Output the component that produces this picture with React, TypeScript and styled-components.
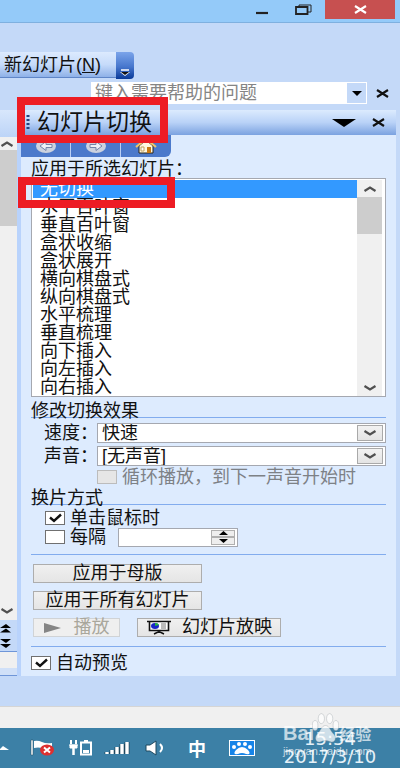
import React from "react";
import styled, { createGlobalStyle } from "styled-components";

const GlobalStyle = createGlobalStyle`
  * { box-sizing: border-box; }
  body {
    margin: 0;
    background: #c4d9f8;
    color: #111;
    font-family: "Liberation Sans", "Noto Sans CJK SC", sans-serif;
    font-size: 18px;
  }
  button, input, select { font: inherit; color: inherit; margin: 0; }
`;

const Page = styled.div`
  position: relative;
  overflow: hidden;
`;

const TitleBar = styled.header`
  display: flex;
  justify-content: flex-end;
  height: 23px;
  padding-right: 5px;
  background: #94caf9;
  border-bottom: 1px solid #7fb0df;
`;

const WindowButton = styled.button<{ $width: number; $close?: boolean }>`
  display: grid;
  place-items: center;
  width: ${(p) => p.$width}px;
  height: 19px;
  padding: 0;
  border: 0;
  background: ${(p) => (p.$close ? "#c75050" : "transparent")};
`;

const Ribbon = styled.div`
  display: flex;
  height: 59px;
  padding-top: 29px;
`;

const NewSlide = styled.button`
  height: 26px;
  width: 116px;
  padding: 0 0 0 4px;
  border: 0;
  text-align: left;
  white-space: nowrap;
  line-height: 24px;
  background: linear-gradient(#dceafe, #c6dbfa 50%, #8eb1e8);
  border-bottom: 1px solid #5f86c8;
`;

const RibbonMore = styled.button`
  display: grid;
  place-items: end center;
  width: 18px;
  height: 27px;
  padding: 0 0 3px;
  border: 0;
  border-radius: 0 4px 4px 0;
  background: linear-gradient(#7ba4ea, #4676cd 55%, #0a3a98);
`;

const HelpRow = styled.div`
  display: flex;
  align-items: center;
  height: 22px;
  padding: 0 2px 0 91px;
`;

const HelpInput = styled.input`
  flex: 1;
  min-width: 0;
  height: 22px;
  padding: 0 4px;
  border: 0;
  background: #fff;
  &::placeholder { color: #858585; opacity: 1; }
`;

const HelpDrop = styled.button`
  display: grid;
  place-items: center;
  width: 21px;
  height: 22px;
  padding: 0;
  border: 1px solid #fff;
  background: #c4d9f8;
`;

const PlainButton = styled.button<{ $width?: number }>`
  display: grid;
  place-items: center;
  width: ${(p) => p.$width ?? 31}px;
  height: 22px;
  padding: 0;
  border: 0;
  background: transparent;
`;

const Workspace = styled.main`
  display: flex;
  padding: 2px 4px 0 0;
  border-top: 4px solid #c4d9f8;
`;

const DocumentEdge = styled.aside`
  display: flex;
  flex-direction: column;
  width: 17px;
  background: #c4d9f8;
`;

const EdgeTop = styled.div`
  height: 27px;
  background: linear-gradient(#d8e7fc, #bcd4f7);
`;

const EdgeTrack = styled.div`
  display: flex;
  flex-direction: column;
  flex: 1;
  background: #f0f0f0;
`;

const EdgeButton = styled.button<{ $height: number; $blue?: boolean }>`
  width: 17px;
  height: ${(p) => p.$height}px;
  padding: 0;
  border: 0;
  line-height: 0;
  text-align: left;
  background: ${(p) => (p.$blue ? "#c4d9f8" : "#f0f0f0")};
`;

const EdgeThumb = styled.div`
  height: 76px;
  background: #cdcdcd;
`;

const EdgeSpace = styled.div`
  flex: 1;
`;

const EdgeFooter = styled.div`
  height: 25px;
  border-top: 1px solid #6f96d8;
  border-bottom: 1px solid #6f96d8;
  background: linear-gradient(#f0f0f0 16px, #d0e0f8 16px);
`;

const Pane = styled.section`
  flex: 1;
  min-width: 0;
  border-left: 4px solid #b9d3fc;
  background: #ddebfe;
`;

const PaneHeader = styled.div`
  display: flex;
  align-items: center;
  height: 25px;
  padding: 0 2px 0 5px;
  background: linear-gradient(#dcebfe, #b9d2f7 50%, #7ba2e0);
`;

const PaneTitle = styled.h1`
  flex: 1;
  margin: 0 0 0 7px;
  font-size: 23px;
  font-weight: 400;
  line-height: 23px;
  white-space: nowrap;
`;

const NavBar = styled.nav`
  display: grid;
  grid-template-columns: 50px 50px 50px;
  width: 150px;
  height: 22px;
  border-radius: 0 0 6px 0;
  background: #4b79cb;
`;

const NavButton = styled.button`
  display: grid;
  place-items: center;
  padding: 0;
  border: 0;
  border-right: 1px solid #b9cff5;
  background: transparent;
  &:last-child { border-right: 0; }
`;

const PaneBody = styled.div`
  padding: 0 10px 4px;
`;

const ListLabel = styled.div`
  padding-top: 3px;
  line-height: 18px;
`;

const ListFrame = styled.div`
  display: flex;
  height: 219px;
  margin-bottom: 2px;
  padding: 1px 3px 0 1px;
  border: 1px solid #a5a8b0;
  background: #fff;
`;

const List = styled.div`
  flex: 1;
  overflow: hidden;
`;

const ListItem = styled.button<{ $selected?: boolean }>`
  display: block;
  width: 100%;
  height: 18px;
  padding: 0 0 0 7px;
  border: 0;
  text-align: left;
  line-height: 18px;
  background: ${(p) => (p.$selected ? "#3399ff" : "transparent")};
  color: ${(p) => (p.$selected ? "#fff" : "#111")};
`;

const ListScroll = styled.div`
  display: flex;
  flex-direction: column;
  width: 25px;
  background: #f0f0f0;
`;

const ScrollButton = styled.button`
  height: 17px;
  padding: 0;
  border: 0;
  line-height: 0;
  background: transparent;
`;

const ScrollThumb = styled.div`
  height: 37px;
  background: #cdcdcd;
`;

const SectionTitle = styled.h2`
  margin: 0;
  padding-top: 6px;
  border-bottom: 1px solid #82acee;
  font-size: 18px;
  font-weight: 400;
  line-height: 12px;
`;

const Fields = styled.div`
  display: grid;
  gap: 3px;
  margin: 5px 0 2px;
`;

const Field = styled.label`
  display: grid;
  grid-template-columns: 53px 1fr;
  padding-left: 13px;
  line-height: 20px;
  white-space: nowrap;
`;

const SelectFrame = styled.span`
  display: flex;
  align-items: center;
  height: 20px;
  padding-right: 2px;
  border: 1px solid #a5a8b0;
  background: #fff;
`;

const Select = styled.select`
  flex: 1;
  appearance: none;
  height: 18px;
  padding: 0 4px;
  border: 0;
  line-height: 18px;
  background: transparent;
`;

const SelectArrow = styled.span`
  display: grid;
  place-items: center;
  width: 26px;
  height: 16px;
  border: 1px solid #a9a9a9;
  background: linear-gradient(#f2f2f2, #e4e4e4);
`;

const CheckRow = styled.div<{ $indent: number; $height: number }>`
  display: flex;
  align-items: center;
  height: ${(p) => p.$height}px;
  padding-left: ${(p) => p.$indent}px;
`;

const CheckLabel = styled.label<{ $disabled?: boolean }>`
  display: flex;
  align-items: center;
  gap: 5px;
  line-height: 18px;
  white-space: nowrap;
  color: ${(p) => (p.$disabled ? "#7d8186" : "#111")};
`;

const CheckFrame = styled.span`
  display: grid;
  width: 20px;
  height: 14px;
  svg { grid-area: 1 / 1; pointer-events: none; }
`;

const CheckInput = styled.input`
  grid-area: 1 / 1;
  appearance: none;
  width: 20px;
  height: 14px;
  border: 1px solid #707070;
  background: #fff;
  &:disabled { border-color: #bcbcbc; background: #e6e6e6; }
`;

const AdvanceRows = styled.div`
  margin-top: 4px;
`;

const Spinner = styled.div`
  display: flex;
  width: 120px;
  height: 19px;
  margin-left: 12px;
  padding: 1px 2px 1px 0;
  border: 1px solid #a5a8b0;
  background: #fff;
`;

const SpinnerInput = styled.input`
  flex: 1;
  min-width: 0;
  padding: 0 4px;
  border: 0;
  background: transparent;
`;

const SpinnerButtons = styled.div`
  display: grid;
  grid-template-rows: 1fr 1fr;
  width: 24px;
`;

const SpinnerButton = styled.button`
  display: grid;
  place-items: center;
  min-height: 0;
  padding: 0;
  border: 1px solid #b0b0b0;
  background: #eeeeee;
`;

const Divider = styled.hr`
  height: 1px;
  margin: 7px 0;
  border: 0;
  background: #82acee;
`;

const Actions = styled.div`
  display: grid;
  gap: 8px;
  margin: 9px 2px;
`;

const ActionRow = styled.div`
  display: flex;
  gap: 17px;
`;

const ActionButton = styled.button<{ $width: number }>`
  display: flex;
  align-items: center;
  justify-content: center;
  gap: 10px;
  width: ${(p) => p.$width}px;
  height: 19px;
  padding: 0;
  border: 1px solid #adadad;
  line-height: 17px;
  white-space: nowrap;
  background: linear-gradient(#f0f0f0, #e5e5e5);
  &:disabled { border-color: #d0d3d6; background: #efefef; color: #a9a79c; }
`;

const BelowPane = styled.div`
  height: 30px;
`;

const StatusBar = styled.footer`
  height: 22px;
  border-top: 1px solid #d5d5d5;
  background: #f0f0f0;
`;

const Taskbar = styled.div`
  position: relative;
  display: flex;
  align-items: center;
  height: 40px;
  background: #3c80a6;
`;

const TrayButton = styled.button<{ $width: number }>`
  display: grid;
  place-items: center;
  width: ${(p) => p.$width}px;
  height: 40px;
  padding: 0;
  border: 0;
  background: transparent;
  color: #fff;
  font-weight: 700;
`;

const Clock = styled.time`
  width: 96px;
  margin-left: 18px;
  color: #e6f1f8;
  font-family: "DejaVu Sans", sans-serif;
  font-size: 18px;
  line-height: 18px;
  text-align: center;
`;

const Watermark = styled.div`
  position: absolute;
  right: 25px;
  bottom: 11px;
  width: 92px;
  color: rgba(255, 255, 255, 0.7);
  white-space: nowrap;
`;

const Brand = styled.div`
  display: flex;
  align-items: center;
  height: 24px;
  font-size: 20px;
  font-weight: 700;
`;

const BrandAddress = styled.div`
  font-size: 11px;
  line-height: 12px;
`;

const BrandPaw = styled.span`
  display: block;
  height: 40px;
  margin-left: -2px;
`;

const BrandText = styled.span`
  font-size: 16px;
`;

const Highlight = styled.div<{ $left: number; $top: number; $width: number; $height: number }>`
  position: absolute;
  left: ${(p) => p.$left}px;
  top: ${(p) => p.$top}px;
  width: ${(p) => p.$width}px;
  height: ${(p) => p.$height}px;
  border: 8px solid #ed1c24;
  pointer-events: none;
`;

const Chevron = ({ up }: { up?: boolean }) => (
  <svg width="14" height="8" viewBox="0 0 14 8" aria-hidden="true">
    <path d={up ? "M1.500 6L7 2.500L12.500 6" : "M1.500 2L7 5.500L12.500 2"} fill="none" stroke="#505050" strokeWidth="2.200" />
  </svg>
);

const Triangle = ({ width, height, up }: { width: number; height: number; up?: boolean }) => (
  <svg width={width} height={height} viewBox="0 0 10 10" preserveAspectRatio="none" aria-hidden="true">
    <path d={up ? "M0 10L5 0L10 10Z" : "M0 0L5 10L10 0Z"} fill="#000" />
  </svg>
);

const Cross = ({ color = "#111" }: { color?: string }) => (
  <svg width="13" height="9" viewBox="0 0 13 9" aria-hidden="true">
    <path d="M1 1L12 8M12 1L1 8" stroke={color} strokeWidth="2.100" />
  </svg>
);

const DoubleArrow = ({ down }: { down?: boolean }) => (
  <svg width="12" height="10" viewBox="0 0 12 10" aria-hidden="true">
    <path d={down ? "M0 0H11L6 4ZM0 5H11L6 9Z" : "M0 5L6 1L11 5ZM0 9.500L6 5.500L11 9.500Z"} fill="#000" />
  </svg>
);

const NavArrow = ({ right }: { right?: boolean }) => (
  <svg width="22" height="16" viewBox="0 0 22 16" aria-hidden="true">
    <ellipse cx="11" cy="8" rx="10" ry="7" fill="#cbd2df" />
    <path
      d={right ? "M5 6.500H11V3.500L17 8L11 12.500V9.500H5Z" : "M17 6.500H11V3.500L5 8L11 12.500V9.500H17Z"}
      fill="#eef1f7"
      stroke="#7484a8"
    />
  </svg>
);

const HomeIcon = () => (
  <svg width="22" height="18" viewBox="0 0 22 18" aria-hidden="true">
    <path d="M4 9V16H18V9L11 3Z" fill="#fff7df" stroke="#2c2415" />
    <path d="M1 10L11 2L21 10" fill="none" stroke="#f0c468" strokeWidth="2.200" />
    <path d="M6 10H9V14H6Z" fill="#fff" stroke="#c4a25c" />
    <path d="M12 10H16V16H12Z" fill="#c87912" />
  </svg>
);

const ScreenIcon = () => (
  <svg width="26" height="15" viewBox="0 0 26 15" aria-hidden="true">
    <path d="M1 1.500H25M3.500 2V10.500H22.500V2" fill="#fff" stroke="#111" strokeWidth="1.600" />
    <path d="M13 11V13M8 14L12 12H14L18 14" fill="none" stroke="#111" strokeWidth="1.500" />
    <ellipse cx="9" cy="6" rx="4" ry="3" fill="#1a25c8" />
    <path d="M9 6V3A4 3 0 0 1 13 5Z" fill="#25b93c" />
    <path d="M15 4H20M15 6H20M15 8H20" stroke="#777" />
  </svg>
);

const Paw = ({ width, height, color }: { width: number; height: number; color: string }) => (
  <svg width={width} height={height} viewBox="0 0 26 24" preserveAspectRatio="none" aria-hidden="true">
    <g fill={color} stroke="rgba(150,160,165,0.4)" strokeWidth="0.800">
      <ellipse cx="3" cy="10" rx="2.700" ry="4" />
      <ellipse cx="9" cy="4.500" rx="3" ry="4" />
      <ellipse cx="17" cy="4.500" rx="3" ry="4" />
      <ellipse cx="23" cy="10" rx="2.700" ry="4" />
      <path d="M13 10C9 10 9 14 5 17C2 20 4 24 8 23Q13 21 18 23C22 24 24 20 21 17C17 14 17 10 13 10Z" />
    </g>
  </svg>
);

interface CheckProps {
  id: string;
  text: string;
  checked?: boolean;
  disabled?: boolean;
}

const Check = ({ id, text, checked, disabled }: CheckProps) => {
  const [on, setOn] = React.useState(Boolean(checked));
  return (
    <CheckLabel htmlFor={id} $disabled={disabled}>
      <CheckFrame>
        <CheckInput id={id} type="checkbox" checked={on} disabled={disabled} onChange={() => setOn(!on)} />
        {on && (
          <svg width="20" height="14" viewBox="0 0 20 14" aria-hidden="true">
            <path d="M5 6.500L9 10L16 3.500" fill="none" stroke="#111" strokeWidth="2.400" />
          </svg>
        )}
      </CheckFrame>
      {text}
    </CheckLabel>
  );
};

const transitions = [
  "无切换",
  "水平百叶窗",
  "垂直百叶窗",
  "盒状收缩",
  "盒状展开",
  "横向棋盘式",
  "纵向棋盘式",
  "水平梳理",
  "垂直梳理",
  "向下插入",
  "向左插入",
  "向右插入",
];

export default function App() {
  const [selected, setSelected] = React.useState(0);
  return (
    <Page>
      <GlobalStyle />
      <TitleBar>
        <WindowButton $width={40} aria-label="最小化">
          <svg width="14" height="10" viewBox="0 0 14 10"><path d="M1 8H13" stroke="#222" strokeWidth="2.200" /></svg>
        </WindowButton>
        <WindowButton $width={43} aria-label="还原">
          <svg width="17" height="11" viewBox="0 0 17 11">
            <path d="M4 2.500V1H16V8H13" fill="none" stroke="#222" />
            <path d="M1 3H12.500V10H1Z" fill="none" stroke="#222" strokeWidth="1.800" />
          </svg>
        </WindowButton>
        <WindowButton $width={70} $close aria-label="关闭"><Cross color="#fff" /></WindowButton>
      </TitleBar>
      <Ribbon>
        <NewSlide>新幻灯片(<u>N</u>)</NewSlide>
        <RibbonMore aria-label="更多按钮">
          <svg width="10" height="7" viewBox="0 0 10 7">
            <path d="M1 1H9" stroke="#fff" strokeWidth="1.500" />
            <path d="M0 3H10L5 7Z" fill="#fff" />
            <path d="M1 3H9L5 6Z" fill="#111" />
          </svg>
        </RibbonMore>
      </Ribbon>
      <HelpRow>
        <HelpInput aria-label="帮助" placeholder="键入需要帮助的问题" />
        <HelpDrop aria-label="帮助历史"><Triangle width={10} height={5} /></HelpDrop>
        <PlainButton aria-label="关闭文档"><Cross /></PlainButton>
      </HelpRow>
      <Workspace>
        <DocumentEdge>
          <EdgeTop />
          <EdgeTrack>
            <EdgeButton $height={13} aria-label="向上滚动"><Chevron up /></EdgeButton>
            <EdgeThumb />
            <EdgeSpace />
            <EdgeButton $height={18} aria-label="向下滚动"><Chevron /></EdgeButton>
          </EdgeTrack>
          <EdgeButton $height={16} $blue aria-label="上一张幻灯片"><DoubleArrow /></EdgeButton>
          <EdgeButton $height={15} $blue aria-label="下一张幻灯片"><DoubleArrow down /></EdgeButton>
          <EdgeFooter />
        </DocumentEdge>
        <Pane>
          <PaneHeader>
            <svg width="4" height="17" viewBox="0 0 4 17" aria-hidden="true">
              <path d="M2 1V17" stroke="#25437e" strokeWidth="3" strokeDasharray="2 2" />
            </svg>
            <PaneTitle>幻灯片切换</PaneTitle>
            <PlainButton $width={39} aria-label="任务窗格菜单"><Triangle width={24} height={8} /></PlainButton>
            <PlainButton aria-label="关闭任务窗格"><Cross /></PlainButton>
          </PaneHeader>
          <NavBar>
            <NavButton aria-label="后退"><NavArrow /></NavButton>
            <NavButton aria-label="前进"><NavArrow right /></NavButton>
            <NavButton aria-label="主页"><HomeIcon /></NavButton>
          </NavBar>
          <PaneBody>
            <ListLabel id="transition-label">应用于所选幻灯片：</ListLabel>
            <ListFrame>
              <List role="listbox" aria-labelledby="transition-label">
                {transitions.map((name, i) => (
                  <ListItem
                    key={name}
                    role="option"
                    aria-selected={i === selected}
                    $selected={i === selected}
                    onClick={() => setSelected(i)}
                  >
                    {name}
                  </ListItem>
                ))}
              </List>
              <ListScroll>
                <ScrollButton aria-label="向上"><Chevron up /></ScrollButton>
                <ScrollThumb />
                <EdgeSpace />
                <ScrollButton aria-label="向下"><Chevron /></ScrollButton>
              </ListScroll>
            </ListFrame>
            <SectionTitle>修改切换效果</SectionTitle>
            <Fields>
              <Field>
                速度：
                <SelectFrame>
                  <Select defaultValue="快速"><option>快速</option></Select>
                  <SelectArrow><Chevron /></SelectArrow>
                </SelectFrame>
              </Field>
              <Field>
                声音：
                <SelectFrame>
                  <Select defaultValue="[无声音]"><option>[无声音]</option></Select>
                  <SelectArrow><Chevron /></SelectArrow>
                </SelectFrame>
              </Field>
            </Fields>
            <CheckRow $indent={66} $height={18}>
              <Check id="loop" text="循环播放，到下一声音开始时" disabled />
            </CheckRow>
            <SectionTitle>换片方式</SectionTitle>
            <AdvanceRows>
              <CheckRow $indent={14} $height={18}>
                <Check id="on-click" text="单击鼠标时" checked />
              </CheckRow>
              <CheckRow $indent={14} $height={20}>
                <Check id="every" text="每隔" />
                <Spinner>
                  <SpinnerInput aria-label="间隔时间" />
                  <SpinnerButtons>
                    <SpinnerButton aria-label="增加"><Triangle width={9} height={4} up /></SpinnerButton>
                    <SpinnerButton aria-label="减少"><Triangle width={9} height={4} /></SpinnerButton>
                  </SpinnerButtons>
                </Spinner>
              </CheckRow>
            </AdvanceRows>
            <Divider />
            <Actions>
              <ActionButton $width={169}>应用于母版</ActionButton>
              <ActionButton $width={169}>应用于所有幻灯片</ActionButton>
              <ActionRow>
                <ActionButton $width={87} disabled>
                  <svg width="20" height="10" viewBox="0 0 20 10" aria-hidden="true">
                    <path d="M0 0L17 5L0 10Z" fill="#858585" />
                  </svg>
                  播放
                </ActionButton>
                <ActionButton $width={144}><ScreenIcon />幻灯片放映</ActionButton>
              </ActionRow>
            </Actions>
            <Divider />
            <CheckRow $indent={0} $height={18}>
              <Check id="preview" text="自动预览" checked />
            </CheckRow>
          </PaneBody>
        </Pane>
      </Workspace>
      <BelowPane />
      <StatusBar />
      <Taskbar>
        <TrayButton $width={22} aria-label="显示隐藏的图标">
          <svg width="22" height="8" viewBox="0 0 22 8"><path d="M0 5L3 2L9 6H0Z" fill="#fff" /></svg>
        </TrayButton>
        <TrayButton $width={40} aria-label="操作中心">
          <svg width="26" height="18" viewBox="0 0 26 18">
            <path d="M2 1H4V16H2Z" fill="#fff" stroke="#1d485f" strokeWidth="0.500" />
            <path d="M5 2Q9 1 13 3Q17 5 23 4V11Q17 12 13 9Q9 8 5 9Z" fill="#fff" />
            <ellipse cx="18" cy="11" rx="7" ry="5.500" fill="#dd3030" />
            <path d="M15 8.500L21 13.500M21 8.500L15 13.500" stroke="#fff" strokeWidth="2" />
          </svg>
        </TrayButton>
        <TrayButton $width={36} aria-label="电源">
          <svg width="26" height="18" viewBox="0 0 26 18">
            <path d="M4 1V5M9 1V5" stroke="#fff" strokeWidth="2" />
            <path d="M2 6H11M3 6V9H10V6Z" fill="#fff" stroke="#fff" />
            <path d="M6.500 9V16" stroke="#fff" strokeWidth="2.500" />
            <path d="M14 3.500H24V15.500H14ZM17 2H21" fill="none" stroke="#fff" strokeWidth="2" />
            <path d="M16 11H22V14H16Z" fill="#fff" />
          </svg>
        </TrayButton>
        <TrayButton $width={38} aria-label="网络">
          <svg width="26" height="16" viewBox="0 0 26 16">
            <path d="M3 12V14M8 10V14M13 7V14M18 4V14M23 2V14" stroke="#1d485f" strokeWidth="5" />
            <path d="M3 12V14M8 10V14M13 7V14M18 4V14M23 2V14" stroke="#fff" strokeWidth="3.400" />
          </svg>
        </TrayButton>
        <TrayButton $width={38} aria-label="音量">
          <svg width="20" height="16" viewBox="0 0 20 16">
            <path d="M1 5H5L11 1V15L5 11H1Z" fill="#fff" stroke="#1d485f" />
            <path d="M15 4Q19 8 15 12" fill="none" stroke="#fff" strokeWidth="2" />
          </svg>
        </TrayButton>
        <TrayButton $width={46} aria-label="输入法">中</TrayButton>
        <TrayButton $width={44} aria-label="百度输入法">
          <svg width="26" height="16" viewBox="0 0 26 16">
            <path d="M0 0H26V16H0Z" fill="#1684e8" stroke="#fff" strokeWidth="2" />
            <g fill="#fff">
              <ellipse cx="5" cy="7" rx="2" ry="2" />
              <ellipse cx="10" cy="4" rx="2" ry="2" />
              <ellipse cx="16" cy="4" rx="2" ry="2" />
              <ellipse cx="21" cy="7" rx="2" ry="2" />
              <path d="M13 7Q10 7 7 10Q3 15 9 14Q13 12 17 14Q23 15 19 10Q16 7 13 7Z" />
            </g>
          </svg>
        </TrayButton>
        <Clock>15:54<br />2017/3/10</Clock>
        <Watermark>
          <Brand>
            Bai
            <BrandPaw><Paw width={27} height={30} color="rgba(255,255,255,0.75)" /></BrandPaw>
            <BrandText>经验</BrandText>
          </Brand>
          <BrandAddress>jingyan.baidu.com</BrandAddress>
        </Watermark>
      </Taskbar>
      <Highlight $left={17} $top={97} $width={151} $height={46} />
      <Highlight $left={18} $top={177} $width={157} $height={31} />
    </Page>
  );
}
